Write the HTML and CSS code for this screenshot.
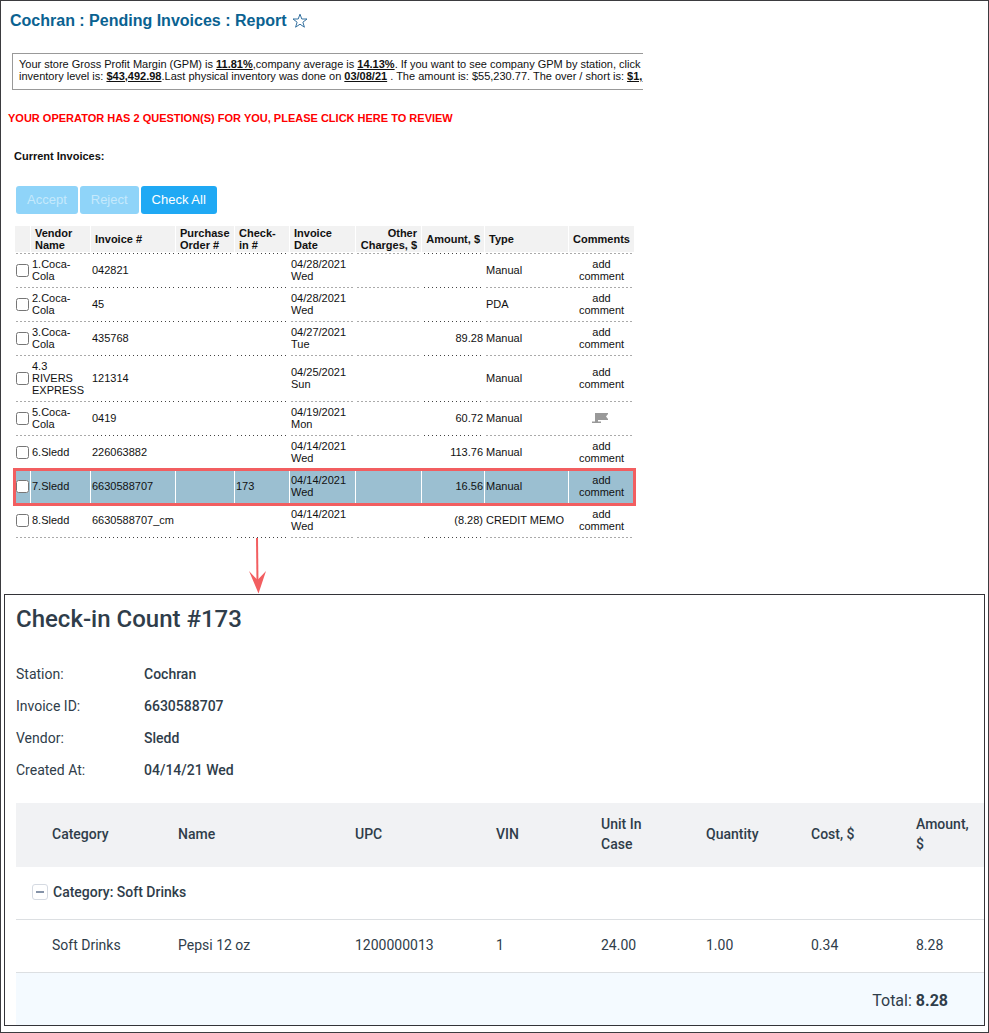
FILE: index.html
```html
<!DOCTYPE html>
<html lang="en">
<head>
<meta charset="utf-8">
<title>Cochran : Pending Invoices : Report</title>
<link rel="stylesheet" href="styles.css">
</head>
<body>
<main class="page">
  <section class="report">
    <h1 class="report-title">Cochran : Pending Invoices : Report
      <svg class="star" viewBox="0 0 16 16" aria-hidden="true"><path d="M8 1.2 9.800 6H15l-4.100 3.200 1.500 5L8 11.200l-4.400 3 1.500-5L1 6h5.200z"/></svg>
    </h1>
    <div class="notice">
      <div>Your store Gross Profit Margin (GPM) is <b>11.81%</b>,company average is <b>14.13%</b>. If you want to see company GPM by station, click</div>
      <div>inventory level is: <b>$43,492.98</b>.Last physical inventory was done on <b>03/08/21</b> . The amount is: $55,230.77. The over / short is: <b>$1,</b></div>
    </div>
    <a class="questions" href="#">YOUR OPERATOR HAS 2 QUESTION(S) FOR YOU, PLEASE CLICK HERE TO REVIEW</a>
    <h2 class="subhead">Current Invoices:</h2>
    <div class="actions">
      <button class="btn" type="button" disabled>Accept</button>
      <button class="btn" type="button" disabled>Reject</button>
      <button class="btn" type="button">Check All</button>
    </div>
    <table class="invoices">
      <colgroup><col class="w-check"><col class="w-vendor"><col class="w-invoice"><col class="w-po"><col class="w-checkin"><col class="w-date"><col class="w-other"><col class="w-amount"><col class="w-type"><col class="w-comments"></colgroup>
      <thead>
        <tr><th></th><th>Vendor Name</th><th>Invoice #</th><th>Purchase Order #</th><th>Check-<span class="keep">in #</span></th><th>Invoice Date</th><th class="num">Other Charges, $</th><th class="num">Amount, $</th><th>Type</th><th class="mid">Comments</th></tr>
      </thead>
      <tbody>
        <tr><td><input type="checkbox" aria-label="Select invoice 042821"></td><td>1.Coca-Cola</td><td>042821</td><td></td><td></td><td>04/28/2021 Wed</td><td></td><td></td><td>Manual</td><td class="mid"><a href="#">add comment</a></td></tr>
        <tr><td><input type="checkbox" aria-label="Select invoice 45"></td><td>2.Coca-Cola</td><td>45</td><td></td><td></td><td>04/28/2021 Wed</td><td></td><td></td><td>PDA</td><td class="mid"><a href="#">add comment</a></td></tr>
        <tr><td><input type="checkbox" aria-label="Select invoice 435768"></td><td>3.Coca-Cola</td><td>435768</td><td></td><td></td><td>04/27/2021 Tue</td><td></td><td class="num">89.28</td><td>Manual</td><td class="mid"><a href="#">add comment</a></td></tr>
        <tr><td><input type="checkbox" aria-label="Select invoice 121314"></td><td>4.3 RIVERS EXPRESS</td><td>121314</td><td></td><td></td><td>04/25/2021 Sun</td><td></td><td></td><td>Manual</td><td class="mid"><a href="#">add comment</a></td></tr>
        <tr><td><input type="checkbox" aria-label="Select invoice 0419"></td><td>5.Coca-Cola</td><td>0419</td><td></td><td></td><td>04/19/2021 Mon</td><td></td><td class="num">60.72</td><td>Manual</td><td class="mid"><a href="#" aria-label="View comment"><svg class="flag" viewBox="0 0 19 10" aria-hidden="true"><path d="M3 0H16V1L14 3.500 16 6V7H6V8.500H9V10H0V8.500H3z"/></svg></a></td></tr>
        <tr><td><input type="checkbox" aria-label="Select invoice 226063882"></td><td>6.Sledd</td><td>226063882</td><td></td><td></td><td>04/14/2021 Wed</td><td></td><td class="num">113.76</td><td>Manual</td><td class="mid"><a href="#">add comment</a></td></tr>
        <tr class="selected"><td><input type="checkbox" aria-label="Select invoice 6630588707"></td><td>7.Sledd</td><td>6630588707</td><td></td><td>173</td><td>04/14/2021 Wed</td><td></td><td class="num">16.56</td><td>Manual</td><td class="mid"><a href="#">add comment</a></td></tr>
        <tr><td><input type="checkbox" aria-label="Select invoice 6630588707_cm"></td><td>8.Sledd</td><td>6630588707_cm</td><td></td><td></td><td>04/14/2021 Wed</td><td></td><td class="num">(8.28)</td><td>CREDIT MEMO</td><td class="mid"><a href="#">add comment</a></td></tr>
      </tbody>
    </table>
  </section>
  <div class="connector">
    <svg class="arrow" viewBox="0 0 20 56" aria-hidden="true"><path class="arrow-line" d="M9 0 9.500 46"/><path class="arrow-head" d="M1 33 9.500 42 18 33 10.500 55.500z"/></svg>
  </div>
  <section class="checkin">
    <h2 class="checkin-title">Check-in Count #173</h2>
    <dl class="facts">
      <dt>Station:</dt><dd>Cochran</dd>
      <dt>Invoice ID:</dt><dd>6630588707</dd>
      <dt>Vendor:</dt><dd>Sledd</dd>
      <dt>Created At:</dt><dd>04/14/21 Wed</dd>
    </dl>
    <table class="items">
      <colgroup><col class="c-category"><col class="c-name"><col class="c-upc"><col class="c-std"><col class="c-std"><col class="c-std"><col class="c-std"><col class="c-last"></colgroup>
      <thead>
        <tr><th>Category</th><th>Name</th><th>UPC</th><th>VIN</th><th>Unit In Case</th><th>Quantity</th><th>Cost, $</th><th>Amount, $</th></tr>
      </thead>
      <tbody>
        <tr><td class="group" colspan="8"><div class="group-row"><button class="toggle" type="button" aria-label="Collapse category"></button><span>Category: Soft Drinks</span></div></td></tr>
        <tr><td>Soft Drinks</td><td>Pepsi 12 oz</td><td>1200000013</td><td>1</td><td>24.00</td><td>1.00</td><td>0.34</td><td>8.28</td></tr>
      </tbody>
      <tfoot>
        <tr><td class="total" colspan="8">Total: <b>8.28</b></td></tr>
      </tfoot>
    </table>
  </section>
</main>
</body>
</html>
```
FILE: styles.css
```css
* { box-sizing: border-box; }
body { margin: 0; background: #fff; }
a { color: inherit; text-decoration: none; }

.page {
  min-height: 100vh;
  padding: 0 3px 6px;
  border: 1px solid #3b3b3f;
}

.report {
  padding: 10px 4px 0;
  font: 11px/12px "Liberation Sans", Arial, sans-serif;
  color: #111;
}
.report-title {
  display: flex;
  align-items: center;
  gap: 6px;
  margin: 0 0 22px 2px;
  font-size: 16px;
  line-height: 20px;
  color: #0a6291;
}
.star { width: 16px; height: 16px; fill: none; stroke: #33709f; stroke-width: 1; }

.notice {
  max-width: 631px;
  margin: 0 0 22px 4px;
  padding: 4px 0 7px 6px;
  border: 1px solid #999;
  border-right: 0;
  overflow: hidden;
  white-space: nowrap;
}
.notice b { text-decoration: underline; }
.questions { display: block; font-weight: bold; color: #f00; }
.subhead { margin: 26px 0 24px 6px; font-size: 11px; line-height: 12px; }

.actions { display: flex; gap: 2px; margin-left: 8px; }
.btn {
  height: 28px;
  padding: 0 11px;
  border: 0;
  border-radius: 3px;
  background: #1fa9f4;
  color: #fff;
  font: 13px/16px "Liberation Sans", Arial, sans-serif;
}
.btn:disabled { background: #8fd4f9; color: #c5e9fc; }

.invoices {
  table-layout: fixed;
  width: 620px;
  margin: 12px 0 0 6px;
  border-spacing: 1px 0;
}
.w-check { width: 15px; }
.w-vendor { width: 59px; }
.w-invoice { width: 84px; }
.w-po { width: 58px; }
.w-checkin { width: 54px; }
.w-date, .w-other, .w-comments { width: 65px; }
.w-amount { width: 62px; }
.w-type { width: 83px; }

/* Each cell draws its own rule: grey dashes, or fine dark dots in some columns. */
.invoices th,
.invoices td {
  --rule: repeating-linear-gradient(90deg, transparent 0 1px, #aaa 1px 3px, transparent 3px 4px);
  background: var(--rule) bottom / 100% 1px no-repeat;
}
.invoices tr > :nth-child(3),
.invoices tr > :nth-child(4),
.invoices tr > :nth-child(5),
.invoices tr > :nth-child(8) {
  --rule: repeating-linear-gradient(90deg, transparent 0 2px, #444 2px 3px, transparent 3px 4px);
}
.invoices th {
  height: 28px;
  padding: 1px 4px 3px;
  background:
    var(--rule) bottom / 100% 1px no-repeat,
    linear-gradient(#f2f2f2, #f2f2f2) top / 100% 26px no-repeat;
  text-align: left;
}
.invoices td {
  height: 34px;
  padding: 4px 1px 6px;
}
.invoices .num { text-align: right; }
.invoices .mid { padding-left: 1px; padding-right: 1px; text-align: center; }
.invoices input { display: block; width: 13px; height: 13px; margin: 0; }
.invoices .mid a { display: block; padding: 0 8px; }
.invoices .selected td { background: #9bbfd1; }
.keep { white-space: nowrap; display: inline-block; }
.selected { outline: 3px solid #f25e60; outline-offset: -1px; }
.flag { display: block; width: 19px; height: 10px; margin: 0 auto; fill: #999; }

.connector { height: 56px; padding-left: 244px; }
.arrow { display: block; width: 20px; height: 56px; }
.arrow-line { fill: none; stroke: #f25e60; stroke-width: 2; }
.arrow-head { fill: #f25e60; }

.checkin {
  padding: 8px 0 0 11px;
  border: 1px solid #333338;
  font: 14px/20px Roboto, sans-serif;
  color: #2f3d4a;
}
.checkin-title { margin: 0 0 29px; font-size: 24px; line-height: 32px; font-weight: 500; }
.facts {
  display: grid;
  grid-template-columns: 128px 1fr;
  row-gap: 12px;
  margin: 0 0 23px;
}
.facts dd { margin: 0; font-weight: 500; }

.items { table-layout: fixed; width: 100%; border-spacing: 0; }
.c-category { width: 146px; }
.c-name { width: 177px; }
.c-upc { width: 141px; }
.c-std { width: 105px; }
.c-last { width: 84px; }
.items th, .items td { padding: 15px 15px 17px 16px; text-align: left; }
.items th:first-child, .items td:first-child { padding-left: 36px; }
.items th { height: 64px; padding-top: 11px; padding-bottom: 13px; background: #f1f2f4; font-weight: 500; }
.items td { height: 53px; border-bottom: 1px solid #dcdfe2; }
.items td.group:first-child { padding-left: 16px; font-weight: 500; }
.items .total {
  height: 52px;
  padding: 16px 36px 12px;
  border-bottom: 0;
  background: #f4faff;
  font-size: 16px;
  line-height: 24px;
  text-align: right;
}
.group-row { display: flex; align-items: center; gap: 5px; }
.toggle {
  display: grid;
  place-items: center;
  width: 16px;
  height: 16px;
  padding: 0;
  border: 1px solid #d5dae2;
  border-radius: 3px;
  background: #fff;
}
.toggle::before { content: ""; width: 8px; height: 2px; background: #8593a8; }
```
